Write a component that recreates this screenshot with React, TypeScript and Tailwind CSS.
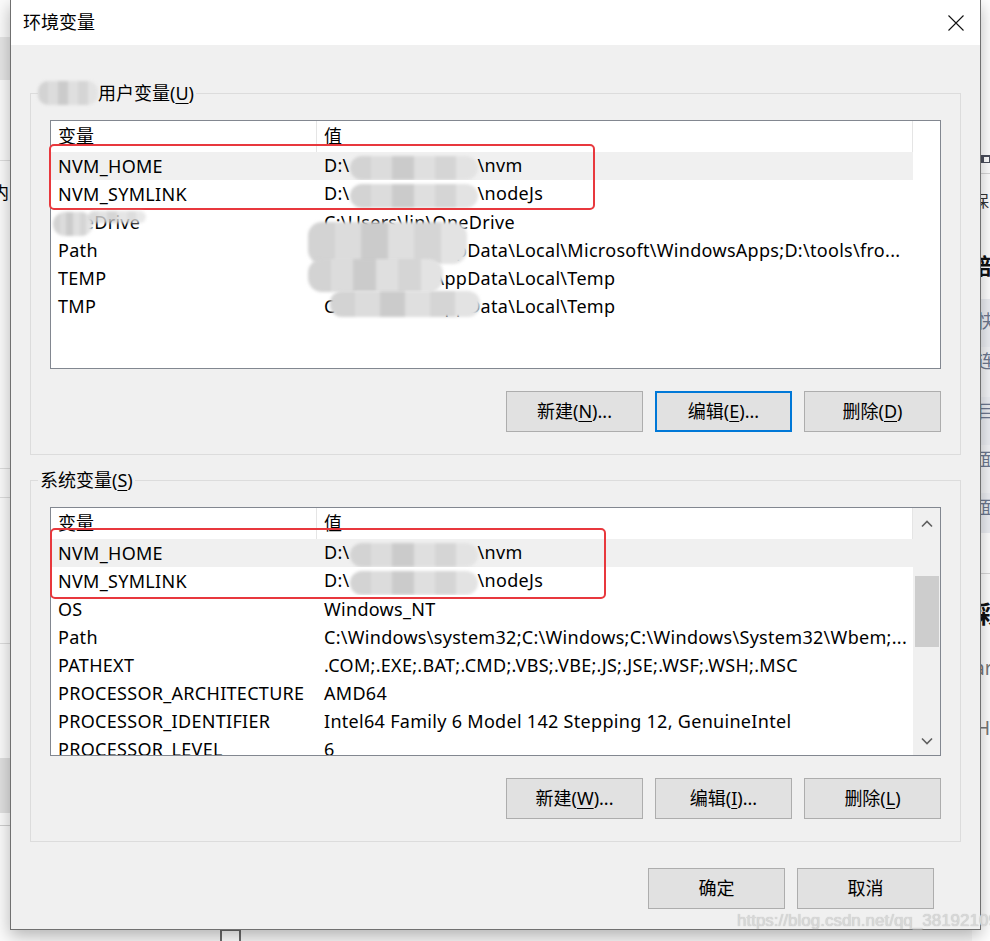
import type { ReactNode } from "react"

type Row = { name: ReactNode; value: ReactNode; hl?: boolean }

function Mosaic({ className }: { className: string }) {
  return (
    <span className={"inline-flex overflow-hidden blur-[1.5px] " + className}>
      <span className="flex-1 bg-[#d3d3d3]" />
      <span className="flex-1 bg-[#dcdcdc]" />
      <span className="flex-1 bg-[#cbcbcb]" />
      <span className="flex-1 bg-[#dfdfdf]" />
      <span className="flex-1 bg-[#d5d5d5]" />
      <span className="flex-1 bg-[#e3e3e3]" />
    </span>
  )
}

function Hidden() {
  return <Mosaic className="h-[24px] w-[128px] rounded-[12px] align-middle" />
}

const userRows: Row[] = [
  { name: "NVM_HOME", value: <>D:\<Hidden />\nvm</>, hl: true },
  { name: "NVM_SYMLINK", value: <>D:\<Hidden />\nodeJs</> },
  { name: "OneDrive", value: "C:\\Users\\lin\\OneDrive" },
  { name: "Path", value: "C:\\Users\\lin\\AppData\\Local\\Microsoft\\WindowsApps;D:\\tools\\fro..." },
  { name: "TEMP", value: "C:\\Users\\lin\\AppData\\Local\\Temp" },
  { name: "TMP", value: "C:\\Users\\lin\\AppData\\Local\\Temp" },
]

const sysRows: Row[] = [
  { name: "NVM_HOME", value: <>D:\<Hidden />\nvm</>, hl: true },
  { name: "NVM_SYMLINK", value: <>D:\<Hidden />\nodeJs</> },
  { name: "OS", value: "Windows_NT" },
  { name: "Path", value: "C:\\Windows\\system32;C:\\Windows;C:\\Windows\\System32\\Wbem;..." },
  { name: "PATHEXT", value: ".COM;.EXE;.BAT;.CMD;.VBS;.VBE;.JS;.JSE;.WSF;.WSH;.MSC" },
  { name: "PROCESSOR_ARCHITECTURE", value: "AMD64" },
  { name: "PROCESSOR_IDENTIFIER", value: "Intel64 Family 6 Model 142 Stepping 12, GenuineIntel" },
  { name: "PROCESSOR_LEVEL", value: "6" },
]

function Btn({ children, focus }: { children: ReactNode; focus?: boolean }) {
  return (
    <div
      className={
        "flex h-[41px] w-[137px] items-center justify-center bg-[#e1e1e1] text-[18px] text-black " +
        (focus ? "border-2 border-[#0078d7]" : "border border-[#adadad]")
      }
    >
      {children}
    </div>
  )
}

function VarList({ rows, scroll }: { rows: Row[]; scroll?: boolean }) {
  return (
    <div className="flex h-[249px] w-[891px] border border-[#828790] bg-white">
      <div className="flex w-[862px] flex-col overflow-hidden">
        <div className="flex h-[31px] shrink-0 items-center">
          <div className="flex h-full w-[266px] items-center border-r border-[#e5e5e5] pl-[7px]">变量</div>
          <div className="flex h-full w-[596px] items-center border-r border-[#e5e5e5] pl-[7px]">值</div>
        </div>
        {rows.map((r, i) => (
          <div
            key={i}
            className={"flex h-[28px] shrink-0 items-center whitespace-nowrap tracking-[0.3px] " + (r.hl ? "bg-[#f0f0f0]" : "")}
          >
            <div className="w-[266px] overflow-hidden pl-[7px]">{r.name}</div>
            <div className="w-[596px] overflow-hidden pl-[7px]">{r.value}</div>
          </div>
        ))}
      </div>
      {scroll && (
        <div className="flex w-[27px] flex-col items-center bg-[#f0f0f0] pt-[12px]">
          <svg width="12" height="8" viewBox="0 0 12 8">
            <polyline points="1,6.5 6,1.5 11,6.5" fill="none" stroke="#606060" strokeWidth="1.6" />
          </svg>
          <div className="mt-[48px] h-[71px] w-[24px] bg-[#cdcdcd]" />
          <svg className="mt-[90px]" width="12" height="8" viewBox="0 0 12 8">
            <polyline points="1,1.5 6,6.5 11,1.5" fill="none" stroke="#606060" strokeWidth="1.6" />
          </svg>
        </div>
      )}
    </div>
  )
}

function RedMark({ className }: { className: string }) {
  return <div className={"pointer-events-none absolute rounded-[5px] border-2 border-[#e8383d] " + className} />
}

export default function App() {
  return (
    <div className="relative h-[941px] w-[990px] overflow-hidden bg-[#f7f7f7] font-['Noto_Sans','Noto_Sans_CJK_SC',sans-serif] text-[18px] text-black">
      {/* window behind, left strip */}
      <div className="absolute left-0 top-0 flex h-full w-[40px] flex-col bg-[#fbfbfb]">
        <div className="mt-[37px] h-[43px] bg-[#e6e6e6]" />
        <div className="mt-[80px] h-px bg-[#dddddd]" />
        <div className="mt-[22px] -ml-[8px] text-[17px] leading-[20px]">内</div>
        <div className="mt-[265px] h-px bg-[#dddddd]" />
        <div className="mt-[28px] h-px bg-[#dddddd]" />
        <div className="mt-[145px] h-px bg-[#dddddd]" />
        <div className="mt-[114px] h-[55px] bg-[#e0e0e0]" />
        <div className="mt-[12px] h-px bg-[#cfcfcf]" />
      </div>
      <div className="absolute left-[220px] top-[929px] h-[14px] w-[21px] border-2 border-[#6a6a6a] bg-white" />

      {/* window behind, right strip */}
      <div className="absolute left-[972px] top-0 flex h-full w-[60px] flex-col bg-white text-[19px] leading-[24px] text-[#333]">
        <div className="mt-[155px] flex h-[8px] items-center bg-[#4b4f5c] pl-[12px]">
          <div className="h-[5px] w-[5px] bg-white" />
        </div>
        <div className="mt-[10px] h-px bg-[#d8d8d8]" />
        <div className="mt-[15px] pl-[1px] text-[16px]">保</div>
        <div className="mt-[40px] pl-[6px] text-[22px] font-bold text-[#111]">部</div>
        <div className="mt-[22px] flex flex-col bg-[#eceef3] pl-[5px] text-[18px] text-[#6c7890]">
          <div className="h-[48px] pt-[10px]">快</div>
          <div className="h-[50px] bg-[#f3f4f7] pt-[2px]">连</div>
          <div className="h-[48px] pt-[2px]">目</div>
          <div className="h-[48px] bg-[#f3f4f7] pt-[2px]">面</div>
          <div className="h-[40px] pt-[2px]">面</div>
        </div>
        <div className="mt-[40px] h-px bg-[#d8d8d8]" />
        <div className="mt-[28px] pl-[4px] text-[24px] font-bold text-[#111]">彩</div>
        <div className="mt-[30px] pl-[2px] text-[#777]">ar</div>
        <div className="mt-[36px] pl-[4px] text-[#777]">HT</div>
      </div>

      {/* dialog */}
      <div className="absolute left-[10px] top-0 flex h-[930px] w-[971px] flex-col border-x border-b border-[#707070] bg-[#f0f0f0] shadow-[0_6px_16px_rgba(0,0,0,0.28)]">
        <div className="flex h-[45px] shrink-0 items-center justify-between bg-white pl-[12px] pr-[16px]">
          <span className="text-[18px]">环境变量</span>
          <svg width="16" height="16" viewBox="0 0 16 16">
            <path d="M0.5 0.5L15.5 15.5M15.5 0.5L0.5 15.5" stroke="#111" strokeWidth="1.1" />
          </svg>
        </div>

        <div className="flex flex-col px-[19px] pt-[48px] pb-[20px]">
          {/* user vars */}
          <div className="relative border border-[#dcdcdc] px-[19px] pt-[26px] pb-[22px]">
            <div className="absolute -top-[14px] left-[7px] flex h-[26px] items-center bg-[#f0f0f0] pr-[2px]">
              <Mosaic className="h-[24px] w-[60px] rounded-[10px]" />
              <span>
                用户变量(<span className="underline underline-offset-[3px]">U</span>)
              </span>
            </div>
            <div className="relative">
              <VarList rows={userRows} />
              <RedMark className="-left-[1px] top-[24px] h-[66px] w-[546px]" />
              <Mosaic className="absolute left-[3px] top-[92px] h-[24px] w-[40px] rounded-[12px]" />
              <Mosaic className="absolute left-[38px] top-[91px] h-[12px] w-[58px] rounded-[6px] opacity-80" />
              <Mosaic className="absolute left-[258px] top-[102px] h-[42px] w-[159px] rounded-[14px]" />
              <Mosaic className="absolute left-[258px] top-[139px] h-[33px] w-[135px] rounded-[14px]" />
              <Mosaic className="absolute left-[280px] top-[171px] h-[26px] w-[150px] rounded-[12px]" />
            </div>
            <div className="mt-[22px] flex justify-end gap-[12px]">
              <Btn>新建(<span className="underline underline-offset-[3px]">N</span>)...</Btn>
              <Btn focus>编辑(<span className="underline underline-offset-[3px]">E</span>)...</Btn>
              <Btn>删除(<span className="underline underline-offset-[3px]">D</span>)</Btn>
            </div>
          </div>

          {/* system vars */}
          <div className="relative mt-[25px] border border-[#dcdcdc] px-[19px] pt-[26px] pb-[22px]">
            <div className="absolute -top-[14px] left-[7px] flex h-[26px] items-center bg-[#f0f0f0] px-[2px]">
              系统变量(<span className="underline underline-offset-[3px]">S</span>)
            </div>
            <div className="relative">
              <VarList rows={sysRows} scroll />
              <RedMark className="left-0 top-[21px] h-[71px] w-[556px]" />
            </div>
            <div className="mt-[22px] flex justify-end gap-[12px]">
              <Btn>新建(<span className="underline underline-offset-[3px]">W</span>)...</Btn>
              <Btn>编辑(<span className="underline underline-offset-[3px]">I</span>)...</Btn>
              <Btn>删除(<span className="underline underline-offset-[3px]">L</span>)</Btn>
            </div>
          </div>

          <div className="mt-[26px] flex justify-end gap-[12px] pr-[27px]">
            <Btn>确定</Btn>
            <Btn>取消</Btn>
          </div>
        </div>
      </div>

      {/* watermark */}
      <div className="pointer-events-none absolute left-[737px] top-[910px] whitespace-nowrap font-['Liberation_Sans',sans-serif] text-[17px] leading-[22px] text-[#d8d8d8] [text-shadow:0_0_1px_#b8b8b8]">
        https://blog.csdn.net/qq_38192109
      </div>
    </div>
  )
}
